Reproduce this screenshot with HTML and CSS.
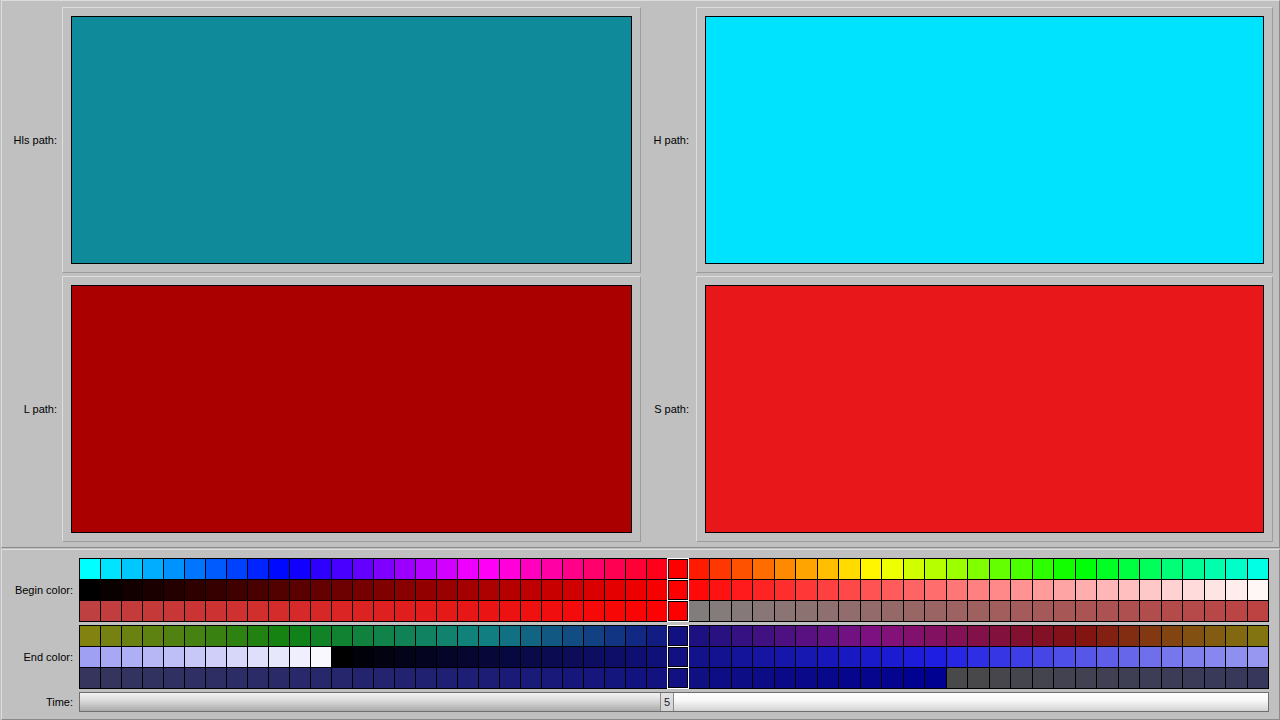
FILE: index.html
```html
<!DOCTYPE html>
<html>
<head>
<meta charset="utf-8">
<title>Color paths</title>
<link rel="stylesheet" href="styles.css">
</head>
<body>
<div class="window">
  <div class="top">
    <div class="label">Hls path:</div>
    <div class="frame"><div class="swatch hls"></div></div>
    <div class="label r">H path:</div>
    <div class="frame"><div class="swatch hp"></div></div>
    <div class="label">L path:</div>
    <div class="frame"><div class="swatch lp"></div></div>
    <div class="label r">S path:</div>
    <div class="frame"><div class="swatch sp"></div></div>
  </div>
  <div class="bottom">
    <div class="label">Begin color:</div>
    <div class="grid" data-h="0" data-l="0.5" data-s="1"></div>
    <div class="label">End color:</div>
    <div class="grid" data-h="240" data-l="0.287" data-s="0.77"></div>
    <div class="label">Time:</div>
    <div class="slider">
      <div class="fill"></div>
      <div class="handle">5</div>
      <div class="rest"></div>
    </div>
  </div>
</div>
<script src="script.js"></script>
</body>
</html>
```
FILE: styles.css
```css
html, body {
  margin: 0;
  padding: 0;
}
body {
  background: #c0c0c0;
  font-family: "Liberation Sans", Arial, sans-serif;
  font-size: 11px;
  color: #000;
  width: 1280px;
  height: 720px;
  overflow: hidden;
}
.window {
  padding-left: 1px;
}
.top {
  box-sizing: border-box;
  width: 1279px;
  height: 548px;
  border: 1px solid;
  border-color: #dcdcdc #8a8a8a #8a8a8a #dcdcdc;
  padding: 6px 6px 5px 0;
  display: grid;
  grid-template-columns: 60px 579px 55px 577px;
  grid-template-rows: 266px 266px;
  row-gap: 3px;
}
.label {
  display: flex;
  align-items: center;
  justify-content: flex-end;
  padding-right: 5px;
  white-space: nowrap;
}
.top .label.r {
  padding-right: 7px;
}
.frame {
  box-sizing: border-box;
  border: 1px solid;
  border-color: #dedede #9c9c9c #9c9c9c #dedede;
  padding: 8px;
}
.swatch {
  box-sizing: border-box;
  height: 100%;
  border: 1px solid #000;
}
.hls { background: #0f8a9b; }
.hp { background: #00e3ff; }
.lp { background: #aa0000; }
.sp { background: #e8171a; }

.bottom {
  box-sizing: border-box;
  width: 1279px;
  height: 171px;
  margin-top: 1px;
  border: 1px solid;
  border-color: #dcdcdc #8a8a8a #8a8a8a #dcdcdc;
  padding: 8px 10px 7px 0;
  display: grid;
  grid-template-columns: 77px 1190px;
  grid-template-rows: 64px 64px 20px;
  row-gap: 3px;
}
.bottom .label {
  padding-right: 6px;
}
.grid {
  box-sizing: border-box;
  width: 1190px;
  height: 64px;
  background: #000;
  padding: 1px;
  display: grid;
  grid-template-columns: repeat(29, 20px) repeat(27, 1fr);
  grid-template-rows: repeat(3, 20px);
  gap: 1px;
}
.cell {
  position: relative;
}
.cell.sel {
  z-index: 1;
  outline: 1px solid #fff;
  box-shadow: inset 0 0 0 1px #000;
}
.slider {
  box-sizing: border-box;
  height: 20px;
  border: 1px solid #6e6e6e;
  display: flex;
}
.fill {
  width: 580px;
  background: linear-gradient(to bottom, #f2f2f2 0%, #d8d8d8 45%, #aaaaaa 100%);
}
.handle {
  box-sizing: border-box;
  width: 14px;
  border-left: 1px solid #8a8a8a;
  border-right: 1px solid #8a8a8a;
  background: linear-gradient(to bottom, #e2e2e2 0%, #d2d2d2 100%);
  display: flex;
  align-items: center;
  justify-content: center;
  font-size: 11px;
  color: #1a1a2a;
}
.rest {
  flex: 1;
  background: linear-gradient(to bottom, #ffffff 0%, #f6f6f6 45%, #d2d2d2 100%);
}
```
FILE: script.js
```js
function toRgb(h, s, l) {
  var c = (1 - Math.abs(2 * l - 1)) * s;
  var hp = h / 60;
  var x = c * (1 - Math.abs((hp % 2) - 1));
  var r = 0, g = 0, b = 0;
  if (hp < 1) { r = c; g = x; }
  else if (hp < 2) { r = x; g = c; }
  else if (hp < 3) { g = c; b = x; }
  else if (hp < 4) { g = x; b = c; }
  else if (hp < 5) { r = x; b = c; }
  else { r = c; b = x; }
  var m = l - c / 2;
  function f(v) { return Math.max(0, Math.min(255, Math.round((v + m) * 255))); }
  return "rgb(" + f(r) + "," + f(g) + "," + f(b) + ")";
}
function wrap(v, n) { return ((v % n) + n) % n; }
document.querySelectorAll(".grid").forEach(function (grid) {
  var H = +grid.dataset.h, L = +grid.dataset.l, S = +grid.dataset.s;
  for (var row = 0; row < 3; row++) {
    for (var i = 0; i < 56; i++) {
      var k = i - 28;
      var h = H, l = L, s = S;
      if (k !== 0) {
        var f = k / 56;
        if (row === 0) h = wrap(H + f * 360, 360);
        else if (row === 1) l = wrap(L + f, 1);
        else s = wrap(S + f, 1);
      }
      var d = document.createElement("div");
      d.className = "cell" + (k === 0 ? " sel" : "");
      d.style.background = toRgb(h, s, l);
      grid.appendChild(d);
    }
  }
});
```
